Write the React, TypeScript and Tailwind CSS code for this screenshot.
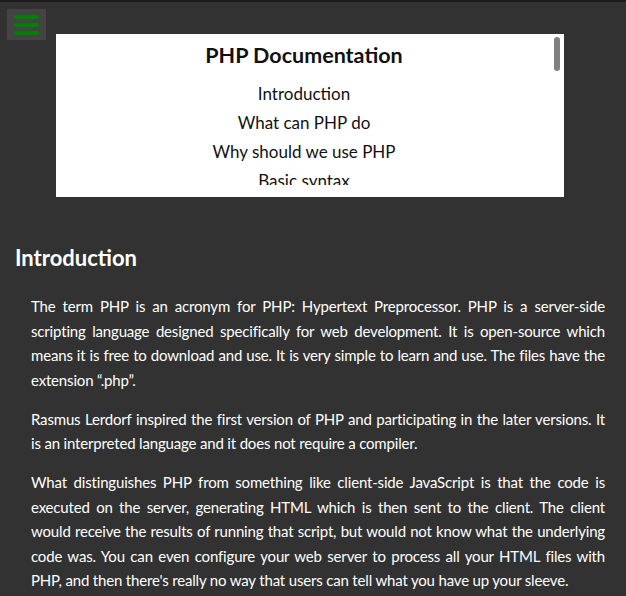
import React from "react";

const font = { fontFamily: "Lato, 'Noto Sans', sans-serif" };

export default function App() {
  const links = ["Introduction", "What can PHP do", "Why should we use PHP", "Basic syntax", "Variables"];
  return (
    <div className="relative min-h-[596px] bg-[#323232] border-t-2 border-[#1c1c1c] text-white" style={font}>
      <button className="absolute left-[7px] top-[7px] w-[39px] h-[31px] bg-[#434343] flex flex-col items-center justify-center gap-[4px]">
        <span className="block w-[25px] h-[4px] rounded-full bg-[#008000]" />
        <span className="block w-[25px] h-[4px] rounded-full bg-[#008000]" />
        <span className="block w-[25px] h-[4px] rounded-full bg-[#008000]" />
      </button>
      <div className="pt-[32px] pl-[56px]">
        <div className="w-[508px] h-[163px] bg-white flex">
          <div className="flex-1 h-[151px] overflow-hidden text-[#111] text-center pt-[8px]">
            <h2 className="text-[21.5px] font-bold leading-[26px]">PHP Documentation</h2>
            <ul className="mt-[11px] text-[17px] leading-[29px]">
              {links.map((l) => (
                <li key={l}>{l}</li>
              ))}
            </ul>
          </div>
          <div className="w-[12px] pt-[3px] flex justify-center">
            <div className="w-[6px] h-[34px] rounded-full bg-[#808080] ml-[-2px]" />
          </div>
        </div>
      </div>
      <h1 className="mt-[48px] ml-[15px] text-[22px] font-bold leading-[26px]">Introduction</h1>
      <div className="mt-[23px] ml-[31px] w-[574px] text-[15px] leading-[24.5px] tracking-[-0.17px] text-justify flex flex-col gap-[14.5px]">
        <p>
          The term PHP is an acronym for PHP: Hypertext Preprocessor. PHP is a server-side scripting language designed specifically for web development. It is open-source which means it is free to download and use. It is very simple to learn and use. The files have the extension “.php”.
        </p>
        <p>
          Rasmus Lerdorf inspired the first version of PHP and participating in the later versions. It is an interpreted language and it does not require a compiler.
        </p>
        <p>
          What distinguishes PHP from something like client-side JavaScript is that the code is executed on the server, generating HTML which is then sent to the client. The client would receive the results of running that script, but would not know what the underlying code was. You can even configure your web server to process all your HTML files with PHP, and then there's really no way that users can tell what you have up your sleeve.
        </p>
      </div>
    </div>
  );
}
